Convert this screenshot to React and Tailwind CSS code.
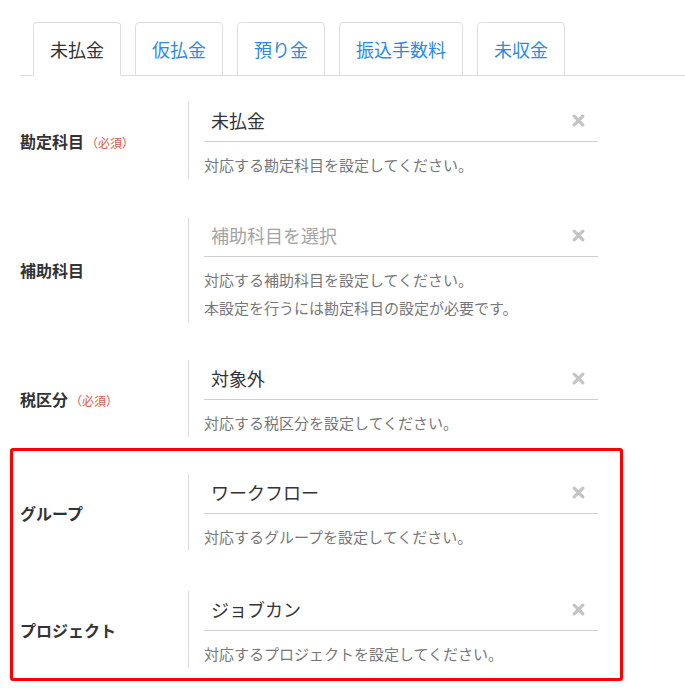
import React, { useState } from "react";

const tabs = ["未払金", "仮払金", "預り金", "振込手数料", "未収金"];

const ClearIcon = () => (
  <svg width="13" height="13" viewBox="0 0 12 12" className="shrink-0">
    <path d="M2 2 L10 10 M10 2 L2 10" stroke="#c4c4c4" strokeWidth="3" strokeLinecap="round" />
  </svg>
);

const FieldRow = ({ label, required, value, placeholder, help }) => (
  <div className="flex items-center">
    <div className="w-[168px] shrink-0 text-[16px] font-bold text-[#333]">
      {label}
      {required && (
        <span className="ml-0.5 text-[12px] font-normal text-[#e0574c]">（必須）</span>
      )}
    </div>
    <div className="w-[410px] border-l border-[#dcdcdc] pl-[15px]">
      <div className="flex h-[40px] items-center justify-between border-b border-[#cfcfcf] pb-[3px] pl-[7px] pr-[13px]">
        {value ? (
          <span className="text-[18px] text-[#333]">{value}</span>
        ) : (
          <span className="text-[18px] text-[#a3a3a3]">{placeholder}</span>
        )}
        <ClearIcon />
      </div>
      <div className="mt-[9px] text-[15px] leading-[28px] text-[#777]">
        {help.map((line) => (
          <div key={line}>{line}</div>
        ))}
      </div>
    </div>
  </div>
);

export default function App() {
  const [active, setActive] = useState(0);

  return (
    <div
      className="min-h-[696px] bg-white pt-[22px]"
      style={{ fontFamily: '"Noto Sans CJK JP", "Noto Sans", sans-serif' }}
    >
      <div className="ml-[20px] flex gap-[14px] border-b border-[#dedede] pl-[13px]">
        {tabs.map((tab, i) => (
          <button
            key={tab}
            onClick={() => setActive(i)}
            className={`-mb-px flex h-[54px] items-center rounded-t-[4px] border border-[#dedede] px-[16px] text-[18px] ${
              active === i ? "border-b-white bg-white text-[#333]" : "text-[#2e8ae0]"
            }`}
          >
            {tab}
          </button>
        ))}
      </div>

      <div className="mt-[26px] flex flex-col gap-[38px] pl-[20px]">
        <FieldRow
          label="勘定科目"
          required
          value="未払金"
          help={["対応する勘定科目を設定してください。"]}
        />
        <FieldRow
          label="補助科目"
          placeholder="補助科目を選択"
          help={["対応する補助科目を設定してください。", "本設定を行うには勘定科目の設定が必要です。"]}
        />
        <FieldRow
          label="税区分"
          required
          value="対象外"
          help={["対応する税区分を設定してください。"]}
        />
      </div>

      <div className="ml-[10px] mt-[11px] flex w-[613px] flex-col gap-[40px] rounded-[3px] border-[3px] border-[#ff0000] pb-[10px] pl-[7px] pt-[23px]">
        <FieldRow label="グループ" value="ワークフロー" help={["対応するグループを設定してください。"]} />
        <FieldRow label="プロジェクト" value="ジョブカン" help={["対応するプロジェクトを設定してください。"]} />
      </div>
    </div>
  );
}
